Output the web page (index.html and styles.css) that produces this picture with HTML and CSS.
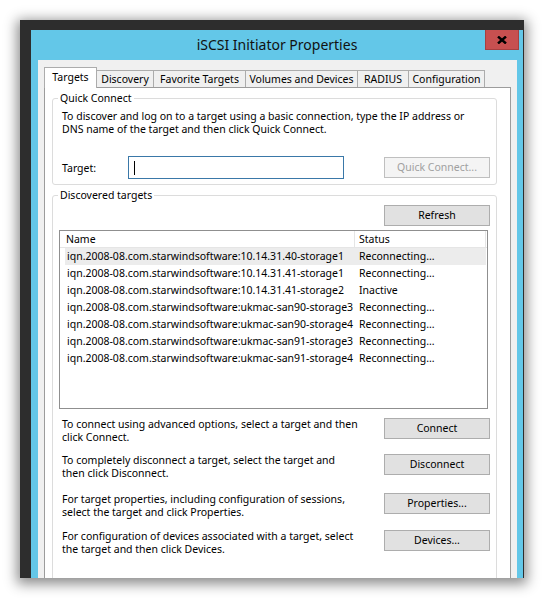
FILE: index.html
```html
<!DOCTYPE html>
<html>

<head>
    <meta charset="UTF-8">
    <meta name="viewport" content="width=device-width, initial-scale=1.0">
    <link rel="stylesheet" href="styles.css">
</head>

<body>
    <div class="frame">
        <div class="window">
            <div class="titlebar">
                <div class="title">iSCSI Initiator Properties</div>
                <div class="close-btn">
                    <svg width="10" height="8" viewBox="0 0 10 8">
                        <path d="M1 0.5 L9 7.5 M9 0.5 L1 7.5" stroke="#000" stroke-width="2.4" fill="none" />
                    </svg>
                </div>
            </div>

            <div class="client">
                <div class="tabs">
                    <div class="tab active tab-targets">Targets</div>
                    <div class="tab tab-discovery">Discovery</div>
                    <div class="tab tab-favorites">Favorite Targets</div>
                    <div class="tab tab-volumes">Volumes and Devices</div>
                    <div class="tab tab-radius">RADIUS</div>
                    <div class="tab tab-config">Configuration</div>
                </div>

                <div class="panel">
                    <fieldset class="group quick">
                        <legend>Quick Connect</legend>
                        <p class="intro">To discover and log on to a target using a basic connection, type the IP address or<br>DNS name of the target and then click Quick Connect.</p>
                        <div class="target-row">
                            <label class="target-label">Target:</label>
                            <div class="textbox"><span class="caret"></span></div>
                            <button class="btn disabled">Quick Connect...</button>
                        </div>
                    </fieldset>

                    <fieldset class="group discovered">
                        <legend>Discovered targets</legend>
                        <div class="refresh-row">
                            <button class="btn">Refresh</button>
                        </div>

                        <div class="list">
                            <div class="list-header">
                                <div class="col-name">Name</div>
                                <div class="col-status">Status</div>
                            </div>
                            <div class="list-row hot">
                                <div class="cell-name">iqn.2008-08.com.starwindsoftware:10.14.31.40-storage1</div>
                                <div class="cell-status">Reconnecting...</div>
                            </div>
                            <div class="list-row">
                                <div class="cell-name">iqn.2008-08.com.starwindsoftware:10.14.31.41-storage1</div>
                                <div class="cell-status">Reconnecting...</div>
                            </div>
                            <div class="list-row">
                                <div class="cell-name">iqn.2008-08.com.starwindsoftware:10.14.31.41-storage2</div>
                                <div class="cell-status">Inactive</div>
                            </div>
                            <div class="list-row">
                                <div class="cell-name">iqn.2008-08.com.starwindsoftware:ukmac-san90-storage3</div>
                                <div class="cell-status">Reconnecting...</div>
                            </div>
                            <div class="list-row">
                                <div class="cell-name">iqn.2008-08.com.starwindsoftware:ukmac-san90-storage4</div>
                                <div class="cell-status">Reconnecting...</div>
                            </div>
                            <div class="list-row">
                                <div class="cell-name">iqn.2008-08.com.starwindsoftware:ukmac-san91-storage3</div>
                                <div class="cell-status">Reconnecting...</div>
                            </div>
                            <div class="list-row">
                                <div class="cell-name">iqn.2008-08.com.starwindsoftware:ukmac-san91-storage4</div>
                                <div class="cell-status">Reconnecting...</div>
                            </div>
                        </div>

                        <div class="action action-connect">
                            <div class="action-text">To connect using advanced options, select a target and then<br>click Connect.</div>
                            <button class="btn">Connect</button>
                        </div>
                        <div class="action action-disconnect">
                            <div class="action-text">To completely disconnect a target, select the target and<br>then click Disconnect.</div>
                            <button class="btn">Disconnect</button>
                        </div>
                        <div class="action action-properties">
                            <div class="action-text">For target properties, including configuration of sessions,<br>select the target and click Properties.</div>
                            <button class="btn">Properties...</button>
                        </div>
                        <div class="action action-devices">
                            <div class="action-text">For configuration of devices associated with a target, select<br>the target and then click Devices.</div>
                            <button class="btn">Devices...</button>
                        </div>
                    </fieldset>
                </div>
            </div>
        </div>
    </div>
</body>

</html>
```

FILE: styles.css
```css
body {
    margin: 0;
    width: 543px;
    height: 598px;
    overflow: hidden;
    background-color: #fff;
    font-family: "Noto Sans", "Open Sans", sans-serif;
    font-size: 10.5px;
    color: #000;
}

/* Window frame with its drop shadow */
.frame {
    box-sizing: border-box;
    width: 504px;
    height: 558px;
    margin: 20px 0 0 20px;
    padding: 10px 1px 0 11px;
    background-color: #2d2d2d;
    box-shadow: 0 3px 12px 3px rgba(0, 0, 0, 0.45);
}

.window {
    display: flex;
    flex-direction: column;
    width: 492px;
    height: 548px;
    overflow: hidden;
    background-color: #63c7e8;
}

.titlebar {
    display: flex;
    height: 30px;
    flex-shrink: 0;
    padding-left: 38px;
}

.title {
    flex: 1;
    text-align: center;
    line-height: 30px;
    font-size: 14px;
    color: #111;
}

.close-btn {
    box-sizing: border-box;
    display: flex;
    align-items: center;
    justify-content: center;
    width: 34px;
    height: 21px;
    margin: -1px 4px 0 0;
    background-color: #c75050;
    border: 1px solid #a64040;
}

.client {
    box-sizing: border-box;
    flex: 1;
    width: 479px;
    margin-left: 7px;
    padding: 7px 6px 0 6px;
    background-color: #f0f0f0;
    overflow: hidden;
}

/* Tabs */
.tabs {
    display: flex;
    align-items: flex-end;
    height: 21px;
    margin-bottom: -1px;
}

.tab {
    box-sizing: border-box;
    height: 17px;
    margin: 0 0 1px -1px;
    border: 1px solid #acacac;
    border-bottom: none;
    background-color: #f0f0f0;
    text-align: center;
    line-height: 16px;
    white-space: nowrap;
}

.tab.active {
    position: relative;
    z-index: 1;
    height: 21px;
    margin: 0;
    padding-top: 1px;
    background-color: #fff;
}

.tab-targets { width: 53px; }
.tab-discovery { width: 58px; }
.tab-favorites { width: 93px; }
.tab-volumes { width: 113px; }
.tab-radius { width: 52px; }
.tab-config { width: 77px; }

.panel {
    box-sizing: border-box;
    width: 467px;
    height: 520px;
    padding: 0 13px 0 7px;
    background-color: #fff;
    border: 1px solid #9c9c9c;
}

/* Group boxes */
.group {
    margin: 3px 0 0 0;
    padding: 0 0 5px 0;
    min-width: 0;
    border: 1px solid #dcdcdc;
    border-radius: 3px;
}

.group legend {
    margin-left: 5px;
    padding: 0 2px;
    line-height: 14px;
}

.discovered {
    padding-bottom: 40px;
}

.intro {
    margin: 5px 0 0 0;
    padding-left: 9px;
    line-height: 13px;
    white-space: nowrap;
}

.target-row {
    display: flex;
    align-items: center;
    height: 23px;
    margin-top: 20px;
    padding-left: 9px;
}

.target-label {
    width: 66px;
}

.textbox {
    box-sizing: border-box;
    display: flex;
    align-items: center;
    width: 216px;
    height: 23px;
    padding-left: 5px;
    border: 1px solid #3a78a8;
    background-color: #fff;
}

.caret {
    width: 1px;
    height: 14px;
    background-color: #000;
}

.target-row .btn {
    margin-left: auto;
}

/* Buttons */
.btn {
    box-sizing: border-box;
    width: 106px;
    height: 21px;
    margin-right: 6px;
    padding: 0;
    border: 1px solid #adadad;
    background-color: #e1e1e1;
    font-family: inherit;
    font-size: inherit;
    color: #000;
    line-height: 19px;
    text-align: center;
}

.btn.disabled {
    border-color: #bfbfbf;
    background-color: #f4f4f4;
    color: #a0a0a0;
}

.refresh-row {
    display: flex;
    justify-content: flex-end;
    margin-top: 3px;
}

/* Target list */
.list {
    box-sizing: border-box;
    width: 429px;
    height: 179px;
    margin: 4px 0 0 6px;
    border: 1px solid #8f8f8f;
    background-color: #fff;
}

.list-header {
    display: flex;
    height: 17px;
    line-height: 16px;
    border-bottom: 1px solid #e5e5e5;
    box-sizing: border-box;
}

.col-name {
    box-sizing: border-box;
    width: 295px;
    padding-left: 6px;
    border-right: 1px solid #e5e5e5;
}

.col-status {
    box-sizing: border-box;
    width: 131px;
    padding-left: 4px;
    border-right: 1px solid #e5e5e5;
}

.list-row {
    display: flex;
    width: 421px;
    height: 17px;
    margin-left: 5px;
    line-height: 17px;
    white-space: nowrap;
}

.list-row.hot {
    background-color: #ececec;
}

.cell-name {
    box-sizing: border-box;
    width: 290px;
    padding-left: 2px;
}

.cell-status {
    padding-left: 4px;
}

/* Action rows under the list */
.action {
    display: flex;
    justify-content: space-between;
    align-items: flex-start;
    padding-left: 9px;
}

.action-text {
    line-height: 13px;
    white-space: nowrap;
}

.action-connect { margin-top: 9px; }
.action-disconnect { margin-top: 10px; }
.action-properties { margin-top: 13px; }
.action-devices { margin-top: 11px; }
```
